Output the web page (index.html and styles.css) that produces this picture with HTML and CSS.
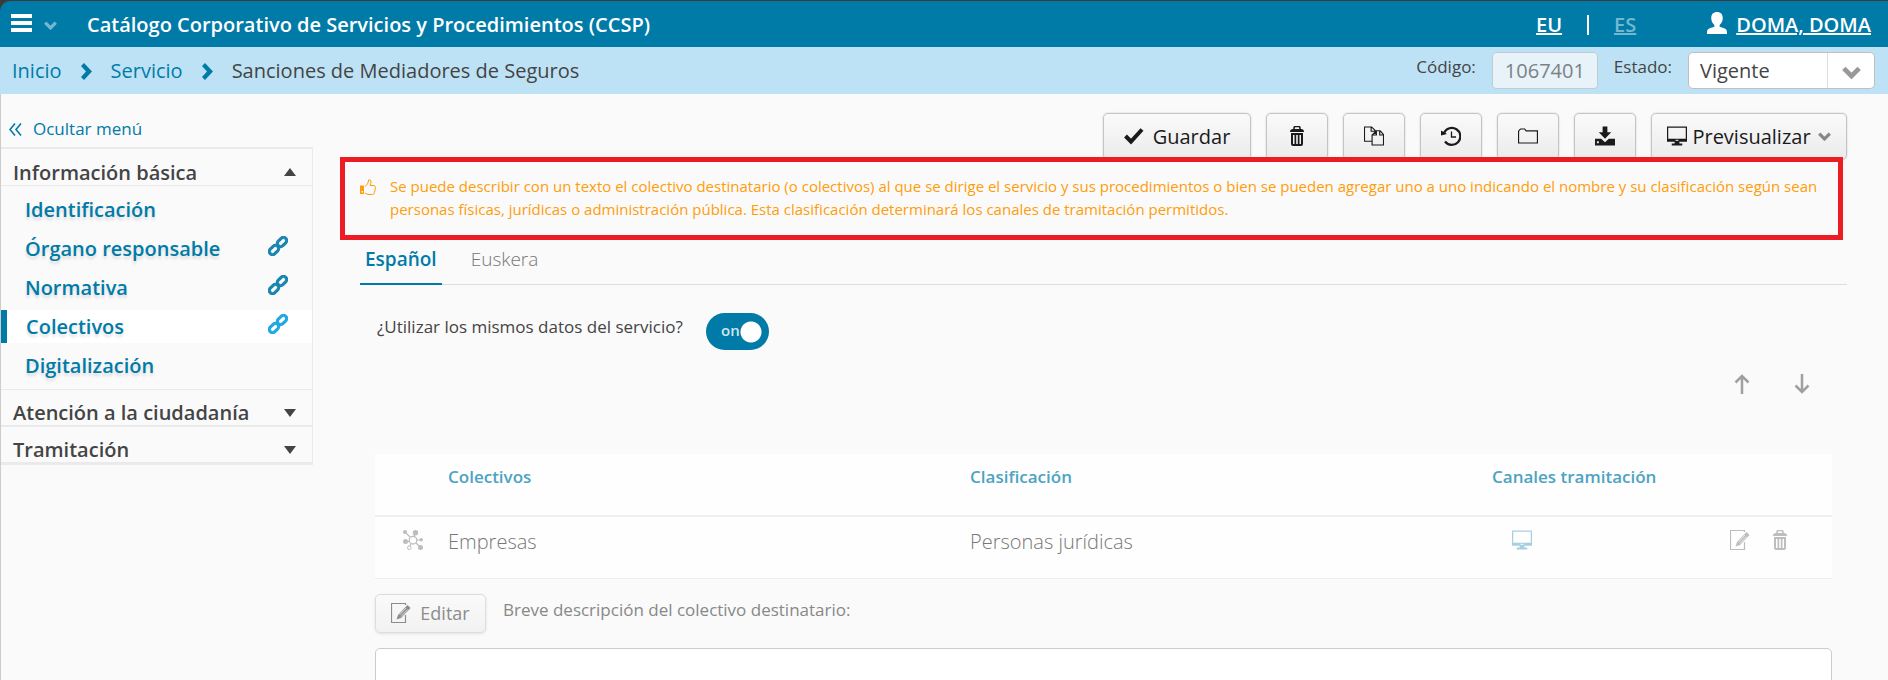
FILE: index.html
```html
<!DOCTYPE html>
<html lang="es">
  <head>
    <meta charset="UTF-8" />
    <meta name="viewport" content="width=device-width, initial-scale=1.0" />
    <title>Catálogo Corporativo de Servicios y Procedimientos</title>
    <link rel="stylesheet" href="styles.css">
  </head>
  <body>
    <!-- iconos compartidos -->
    <svg class="sprite" aria-hidden="true">
      <symbol id="chevron" viewBox="0 0 16 11">
        <path d="M1.500 2l6.500 6.500L14.500 2" fill="none" stroke="currentColor" stroke-width="4" />
      </symbol>
      <symbol id="next" viewBox="0 0 11 17">
        <path d="M0 3L3 0l8 8.500L3 17l-3-3 5-5.500z" fill="currentColor" />
      </symbol>
      <symbol id="link" viewBox="0 0 20 20">
        <g fill="none" stroke="currentColor" stroke-width="3.200">
          <rect x="-2" y="-3.200" width="10.500" height="6.400" rx="3.200" transform="translate(11.700 8.300) rotate(-45)" />
          <rect x="-8.500" y="-3.200" width="10.500" height="6.400" rx="3.200" transform="translate(8.300 11.700) rotate(-45)" />
        </g>
      </symbol>
      <symbol id="trash" viewBox="0 0 20 20">
        <path d="M7 3V2q0-1.500 1.500-1.500h3Q13 .5 13 2v1" fill="none" stroke="currentColor" stroke-width="1.500" />
        <path d="M3 6q0-3 3-3h8q3 0 3 3z" fill="currentColor" />
        <path d="M4 7h12v11q0 2-2 2H6q-2 0-2-2zM6 9v9h1.500V9zM9.200 9v9h1.600V9zM12.500 9v9H14V9z" fill="currentColor" fill-rule="evenodd" />
      </symbol>
      <symbol id="copy" viewBox="0 0 21 20">
        <path d="M8.500 15.500H.5V.5H8l4 4V8M7.500.5V5H12M8.500 19.500V9L13 4.500h4l3.500 4v11zM16.500 4.500V9h4M8.500 9H13V4.500" fill="none" stroke="currentColor" stroke-width="1.200" />
      </symbol>
      <symbol id="history" viewBox="0 0 20 20">
        <path d="M3 7a8.500 8.500 0 1 1 1 8.500" fill="none" stroke="currentColor" stroke-width="2.200" />
        <path d="M0 4.500v5l6-1.500z" fill="currentColor" />
        <path d="M10.500 5.500v5.500H15" fill="none" stroke="currentColor" stroke-width="1.300" />
      </symbol>
      <symbol id="folder" viewBox="0 0 21 16">
        <path d="M.6 15.400V3l2-2.400H7l1.500 2h11.900v12.800z" fill="none" stroke="currentColor" stroke-width="1.200" />
      </symbol>
      <symbol id="download" viewBox="0 0 21 20">
        <path d="M8 0h5v6h4l-6.500 7L4 6h4z" fill="currentColor" />
        <path d="M0 13h6.500l4 3.500 4-3.500H21v7H0zM2 15.500v2h2v-2z" fill="currentColor" fill-rule="evenodd" />
      </symbol>
      <symbol id="screen" viewBox="0 0 21 20">
        <path d="M0 0h21v16h-8v2h3v2H5v-2h3v-2H0zM1.300 1.300v11.700h18.400V1.300z" fill="currentColor" fill-rule="evenodd" />
        <path d="M9 14h3v1H9z" fill="#fff" />
      </symbol>
      <symbol id="edit" viewBox="0 0 20 20">
        <path d="M14.500 12v7.500h-14V.5h14V2" fill="none" stroke="currentColor" stroke-width="1.200" />
        <path d="M16.500 2l3 3L10 15l-4.500 1.500L7 12z" fill="currentColor" />
        <path d="M15 5L8.500 12M16.500 6.500L10 13.500" stroke="#fafafa" stroke-width=".7" />
      </symbol>
      <symbol id="nodes" viewBox="0 0 20 20">
        <path d="M2 2l5 5M12 3l-1 4M14 10h4M3 11.500h4M6.500 17l1.500-3M13 13l4 4" stroke="currentColor" stroke-width="1.200" />
        <circle cx="10" cy="10.200" r="3.800" fill="none" stroke="currentColor" stroke-width="1.300" />
        <circle cx="6.300" cy="17.800" r="1.800" fill="#fff" stroke="currentColor" />
        <g fill="currentColor">
          <circle cx="2" cy="2" r="2" />
          <circle cx="12.500" cy="2.700" r="2.700" />
          <circle cx="18.200" cy="9.800" r="1.800" />
          <circle cx="2.500" cy="11.500" r="2.500" />
          <circle cx="17.500" cy="17.500" r="2.500" />
        </g>
      </symbol>
      <symbol id="arrow" viewBox="0 0 16 20">
        <path d="M8 20V2M1.500 8.500L8 2l6.500 6.500" fill="none" stroke="currentColor" stroke-width="2.500" />
      </symbol>
    </svg>

    <div class="app">
      <header class="topbar">
        <button class="menu-btn" type="button" aria-label="Menú">
          <svg class="bars" viewBox="0 0 21 18"><path d="M0 0h21v4H0zM0 7h21v4H0zM0 14h21v4H0z" fill="#fff" /></svg>
          <svg class="caret"><use href="#chevron" /></svg>
        </button>
        <h1>Catálogo Corporativo de Servicios y Procedimientos (CCSP)</h1>
        <nav class="langs">
          <a href="#">EU</a>
          <span class="divider"></span>
          <a class="current" href="#">ES</a>
        </nav>
        <a class="user" href="#">
          <svg viewBox="0 0 19 21"><path d="M9.500 0C13 0 15 2 15 6c0 3-1.500 5-3 6.500v1.500c2 1 7 1 7 5v2H0v-2c0-4 5-4 7-5v-1.500C5.500 11 4 9 4 6c0-4 2-6 5.500-6z" fill="#fff" /></svg>
          <span>DOMA, DOMA</span>
        </a>
      </header>

      <div class="subbar">
        <nav class="crumbs">
          <a href="#">Inicio</a>
          <svg><use href="#next" /></svg>
          <a href="#">Servicio</a>
          <svg><use href="#next" /></svg>
          <span>Sanciones de Mediadores de Seguros</span>
        </nav>
        <form class="status">
          <label for="codigo">Código:</label>
          <input type="text" id="codigo" value="1067401" disabled />
          <label for="estado">Estado:</label>
          <div class="select">
            <select id="estado">
              <option>Vigente</option>
            </select>
            <svg><use href="#chevron" /></svg>
          </div>
        </form>
      </div>

      <div class="page">
        <aside class="sidebar">
          <a class="hide-menu" href="#">
            <svg viewBox="0 0 13 13"><path d="M6 .5l-5 6 5 6M12 .5l-5 6 5 6" fill="none" stroke="currentColor" stroke-width="1.600" /></svg>
            Ocultar menú
          </a>
          <nav class="menu">
            <button class="section open" type="button">Información básica <i></i></button>
            <ul>
              <li><a href="#">Identificación</a></li>
              <li><a href="#">Órgano responsable <svg><use href="#link" /></svg></a></li>
              <li><a href="#">Normativa <svg><use href="#link" /></svg></a></li>
              <li class="active"><a href="#">Colectivos <svg><use href="#link" /></svg></a></li>
              <li><a href="#">Digitalización</a></li>
            </ul>
            <button class="section" type="button">Atención a la ciudadanía <i></i></button>
            <button class="section" type="button">Tramitación <i></i></button>
          </nav>
        </aside>

        <main class="content">
          <div class="toolbar">
            <button class="btn save" type="button">
              <svg viewBox="0 0 20 16"><path d="M1.500 8l5.500 5.500L18 1.500" fill="none" stroke="currentColor" stroke-width="4" /></svg>
              Guardar
            </button>
            <button class="btn" type="button" aria-label="Eliminar"><svg><use href="#trash" /></svg></button>
            <button class="btn" type="button" aria-label="Copiar"><svg><use href="#copy" /></svg></button>
            <button class="btn" type="button" aria-label="Historial"><svg><use href="#history" /></svg></button>
            <button class="btn" type="button" aria-label="Carpeta"><svg><use href="#folder" /></svg></button>
            <button class="btn" type="button" aria-label="Descargar"><svg><use href="#download" /></svg></button>
            <button class="btn preview" type="button">
              <svg><use href="#screen" /></svg>
              Previsualizar
              <svg class="caret"><use href="#chevron" /></svg>
            </button>
          </div>

          <div class="notice">
            <svg viewBox="0 0 16 16">
              <path d="M0 6.500h4v8.500H0zM1.500 12v1.500H3V12z" fill="currentColor" fill-rule="evenodd" />
              <path d="M5 7.500C7 6 8.500 4 8.500 1q2-1 2.500 1.500 0 2-1 4h4q1.500.5 1.500 2l-1 5q-.5 2-2 2H8L5 14" fill="none" stroke="currentColor" />
            </svg>
            <p>Se puede describir con un texto el colectivo destinatario (o colectivos) al que se dirige el servicio y sus procedimientos o bien se pueden agregar uno a uno indicando el nombre y su clasificación según sean personas físicas, jurídicas o administración pública. Esta clasificación determinará los canales de tramitación permitidos.</p>
          </div>

          <div class="tabs" role="tablist">
            <button class="selected" type="button" role="tab">Español</button>
            <button type="button" role="tab">Euskera</button>
          </div>

          <div class="panel">
            <div class="question">
              <label for="mismos">¿Utilizar los mismos datos del servicio?</label>
              <div class="switch">
                <input type="checkbox" id="mismos" checked />
                <span>on</span>
              </div>
            </div>

            <div class="order">
              <button type="button" aria-label="Subir"><svg><use href="#arrow" /></svg></button>
              <button class="down" type="button" aria-label="Bajar"><svg><use href="#arrow" /></svg></button>
            </div>

            <table>
              <thead>
                <tr>
                  <th class="handle"></th>
                  <th>Colectivos</th>
                  <th>Clasificación</th>
                  <th class="channels">Canales tramitación</th>
                  <th class="actions"></th>
                </tr>
              </thead>
              <tbody>
                <tr>
                  <td class="handle"><svg><use href="#nodes" /></svg></td>
                  <td>Empresas</td>
                  <td>Personas jurídicas</td>
                  <td class="channels"><svg><use href="#screen" /></svg></td>
                  <td class="actions">
                    <button type="button" aria-label="Editar fila"><svg><use href="#edit" /></svg></button>
                    <button type="button" aria-label="Eliminar fila"><svg><use href="#trash" /></svg></button>
                  </td>
                </tr>
              </tbody>
            </table>

            <div class="describe">
              <button class="btn" type="button" disabled><svg><use href="#edit" /></svg> Editar</button>
              <label for="descripcion">Breve descripción del colectivo destinatario:</label>
            </div>
            <textarea id="descripcion" rows="5" disabled></textarea>
          </div>
        </main>
      </div>
    </div>
  </body>
</html>
```

FILE: styles.css
```css
* {
  box-sizing: border-box;
}
body {
  margin: 0;
  background: #3a3a3a;
  color: #444;
  font-family: "Open Sans", sans-serif;
  font-size: 17px;
  line-height: 24px;
}
a {
  color: #007ba8;
  text-decoration: none;
}
button,
input,
select,
textarea {
  font-family: inherit;
  font-size: 20px;
  color: inherit;
}
button {
  background: none;
  border: 0;
  padding: 0;
  cursor: pointer;
}
svg {
  display: block;
  flex: none;
  width: 20px;
  height: 20px;
}
.sprite {
  position: absolute;
  width: 0;
  height: 0;
}
.app {
  display: flex;
  flex-direction: column;
  height: 100vh;
  padding-top: 1px;
  overflow: hidden;
}

/* cabecera */
.topbar {
  display: flex;
  flex: none;
  align-items: center;
  height: 46px;
  padding: 2px 17px 0 11px;
  background: #007ba8;
  border-top-left-radius: 10px;
  color: #fff;
  font-size: 20px;
  font-weight: 600;
}
.topbar a {
  color: #fff;
  text-decoration: underline;
}
.topbar h1 {
  flex: 1;
  margin: 0;
  font-size: 20px;
  font-weight: 600;
}
.menu-btn {
  display: flex;
  align-items: center;
  gap: 12px;
  width: 76px;
}
.menu-btn .bars {
  width: 21px;
  height: 18px;
  margin-bottom: 4px;
}
.menu-btn .caret {
  width: 13px;
  height: 9px;
  color: #73b8d1;
}
.langs {
  display: flex;
  align-items: center;
  gap: 25px;
  margin-right: 71px;
}
.langs .divider {
  width: 2px;
  height: 20px;
  background: #fff;
}
.topbar .langs .current {
  color: #73b8d1;
}
.user {
  display: flex;
  align-items: center;
  gap: 9px;
}
.user svg {
  height: 22px;
  margin-bottom: 4px;
}

/* migas y estado */
.subbar {
  display: flex;
  flex: none;
  justify-content: space-between;
  height: 47px;
  padding: 0 13px 0 12px;
  background: #bee2f5;
}
.crumbs {
  display: flex;
  align-items: center;
  gap: 19px;
  padding-top: 1px;
  font-size: 20px;
}
.crumbs svg {
  width: 11px;
  height: 17px;
  color: #007ba8;
}
.status {
  display: flex;
  gap: 16px;
  padding-top: 5px;
}
.status label {
  padding-top: 3px;
}
.status input {
  width: 106px;
  height: 37px;
  padding: 0 12px;
  border: 1px solid #c0ccd2;
  border-radius: 4px;
  background: #e7f2f9;
  color: #7b8286;
}
.status .select {
  position: relative;
  width: 187px;
  height: 37px;
}
.status select {
  appearance: none;
  width: 100%;
  height: 100%;
  padding: 0 11px;
  border: 1px solid #c0c0c0;
  border-radius: 5px;
  background: linear-gradient(#ddd, #ddd) right 46px top / 1px 100% no-repeat #fff;
}
.select svg {
  position: absolute;
  right: 14px;
  top: 14px;
  width: 19px;
  height: 13px;
  color: #999;
  pointer-events: none;
}

.page {
  display: flex;
  flex: 1;
  min-height: 0;
  background: #fafafa;
  border-left: 1px solid #ccc;
}

/* menu lateral */
.sidebar {
  flex: none;
  width: 312px;
}
.hide-menu {
  display: flex;
  align-items: center;
  gap: 11px;
  height: 53px;
  padding: 17px 8px 0;
}
.hide-menu svg {
  width: 13px;
  height: 13px;
}
.menu {
  border: 1px solid #eaeaea;
  border-width: 2px 1px 1px 0;
}
.section {
  display: flex;
  align-items: center;
  justify-content: space-between;
  width: 100%;
  height: 37px;
  padding: 10px 16px 0 12px;
  border-bottom: 2px solid #eaeaea;
  font-weight: 600;
}
.section i {
  border: 6px solid transparent;
  border-width: 8px 6px 0;
  border-top-color: #444;
}
.section.open {
  border-bottom-width: 1px;
}
.section.open i {
  border-width: 0 6px 8px;
  border-bottom-color: #444;
}
.menu ul {
  margin: 0;
  padding: 4px 0 1px;
  border-bottom: 1px solid #eaeaea;
  list-style: none;
}
.menu li a {
  display: flex;
  justify-content: space-between;
  height: 33px;
  margin: 3px 0 6px;
  padding: 3px 24px 0;
  border-left: 0 solid #007ba8;
  font-size: 20px;
  font-weight: 600;
  line-height: 28px;
  text-shadow: 0 3px 3px rgba(0, 0, 0, .12);
}
.menu li svg {
  margin-top: 1px;
  color: #1b86b0;
}
.menu li.active a {
  padding-left: 19px;
  border-left-width: 6px;
  background: #fff;
}
.menu li.active svg {
  color: #21a9e1;
}

/* contenido */
.content {
  flex: 1;
  min-width: 0;
  padding: 19px 41px 0 27px;
}
.btn {
  display: flex;
  align-items: center;
  justify-content: center;
  gap: 9px;
  border: 1px solid #c4c4c4;
  border-radius: 5px;
  background: linear-gradient(#fafafa, #ebebeb);
  box-shadow: 0 0 2px rgba(0, 0, 0, .2);
}
.toolbar {
  display: flex;
  justify-content: flex-end;
  gap: 15px;
}
.toolbar .btn {
  width: 62px;
  height: 47px;
  color: #1a1a1a;
}
.toolbar .btn svg {
  margin-bottom: 2px;
}
.toolbar .save {
  width: 148px;
}
.toolbar .preview {
  gap: 5px;
  width: 196px;
}
.toolbar .preview .caret {
  width: 13px;
  height: 9px;
  margin: 0 0 0 2px;
  color: #888;
}
.notice {
  position: relative;
  display: flex;
  gap: 14px;
  margin: -3px 4px 0 0;
  padding: 13px 15px 14px;
  border: 5px solid #ed1c24;
  background: #fafafa;
  color: #ff9d0a;
  font-size: 15px;
  line-height: 23px;
}
.notice svg {
  width: 16px;
  height: 16px;
  margin-top: 4px;
}
.notice p {
  margin: 0;
}
.tabs {
  display: flex;
  gap: 24px;
  height: 45px;
  margin-left: 20px;
  border-bottom: 1px solid #ddd;
}
.tabs button {
  height: 45px;
  padding: 0 5px 6px;
  border-bottom: 2px solid transparent;
  color: #777;
  font-size: 19px;
  font-weight: 300;
}
.tabs .selected {
  border-color: #007ba8;
  color: #007ba8;
  font-weight: 600;
}
.panel {
  padding: 28px 15px 0 35px;
}
.question {
  display: flex;
}
.question label {
  width: 331px;
  padding: 2px 0 0 2px;
}
.switch {
  position: relative;
}
.switch input {
  appearance: none;
  display: block;
  width: 63px;
  height: 37px;
  margin: 0;
  border-radius: 19px;
  background: radial-gradient(circle at 45px 19px, #fff 10px, transparent 11px) #007ba8;
}
.switch span {
  position: absolute;
  left: 15px;
  top: 5px;
  color: #cfe6ef;
  font-size: 15px;
  font-weight: 600;
  pointer-events: none;
}
.order {
  display: flex;
  justify-content: flex-end;
  gap: 44px;
  padding: 24px 22px 60px;
  color: #a0a0a0;
}
.order svg {
  width: 16px;
}
.order .down {
  transform: rotate(180deg);
}
table {
  width: 100%;
  border-collapse: collapse;
  table-layout: fixed;
  background: #fefefe;
}
th,
td {
  height: 62px;
  padding: 11px 0 0;
  text-align: left;
  vertical-align: top;
}
th {
  border-bottom: 2px solid #f0f0f0;
  color: #4da3c2;
  font-weight: 600;
}
td {
  border-bottom: 1px solid #eee;
  color: #777;
  font-size: 20px;
  font-weight: 300;
  line-height: 28px;
}
td svg {
  margin-top: 2px;
  color: #bdbdbd;
}
.handle {
  width: 73px;
  padding-left: 28px;
}
.channels {
  width: 238px;
}
td.channels svg {
  margin-left: 20px;
  color: #a6d0e0;
}
.actions {
  width: 102px;
}
.actions button {
  margin-right: 15px;
}
.describe {
  display: flex;
  gap: 17px;
  margin: 15px 0;
}
.describe .btn {
  width: 111px;
  height: 39px;
  border-color: #ddd;
  background: linear-gradient(#fafafa, #f2f2f2);
  box-shadow: 0 1px 3px rgba(0, 0, 0, .1);
  color: #8c8c8c;
  font-size: 18px;
}
.describe label {
  padding-top: 4px;
  color: #888;
}
textarea {
  display: block;
  width: 100%;
  border: 1px solid #ccc;
  border-radius: 5px;
  background: #fff;
  resize: none;
}
```
